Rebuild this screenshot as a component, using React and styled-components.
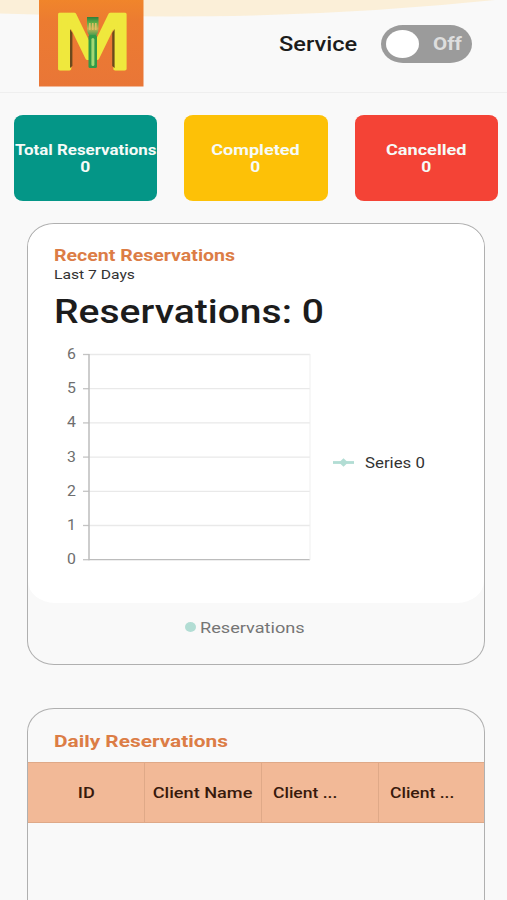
import React,{useState} from 'react';
import styled, { createGlobalStyle } from 'styled-components';

const GlobalStyle = createGlobalStyle`
  * {
    box-sizing: border-box;
  }
  body {
    margin: 0;
    background: #f9f9f9;
    font-family: Roboto, sans-serif;
    color: #1c1c1c;
    overflow: hidden;
  }
`

const stats = [
    { title: 'Total Reservations', value: 0, color: '#049687', stretch: 1.165 },
    { title: 'Completed', value: 0, color: '#fdc107', stretch: 1.245 },
    { title: 'Cancelled', value: 0, color: '#f44336', stretch: 1.25 },
];

const columns = [
    { title: 'ID', pad: 0, center: true, stretch: 1.17 },
    { title: 'Client Name', pad: 0, center: true, stretch: 1.17 },
    { title: 'Client ...', pad: 10.5, stretch: 1.13 },
    { title: 'Client ...', pad: 10.5, stretch: 1.13 },
];

const ticks = [6, 5, 4, 3, 2, 1, 0];

function Logo() {
    return (
        <LogoBox viewBox="0 0 105 87">
            <defs>
                <linearGradient id="bg" x1="0" y1="0" x2="0" y2="1">
                    <stop offset="0" stopColor="#f0852b" />
                    <stop offset="0.25" stopColor="#ec7b31" />
                    <stop offset="1" stopColor="#e97637" />
                </linearGradient>
                <linearGradient id="fork" x1="0" y1="0" x2="0" y2="1">
                    <stop offset="0" stopColor="#2f7f3c" />
                    <stop offset="0.3" stopColor="#5fae45" />
                    <stop offset="0.6" stopColor="#c3b356" />
                    <stop offset="1" stopColor="#2f9a4c" />
                </linearGradient>
            </defs>
            <rect width="104.5" height="86.5" fill="url(#bg)" />
            <LogoLetter transform="translate(11.4 69) scale(1.285 1)">M</LogoLetter>
            <path d="M31 29l2.400 4v33l-2.400 2z" fill="#6b4a1c" />
            <path d="M75.600 29l-2.400 4v33l2.400 2z" fill="#6b4a1c" />
            {/* fork */}
            <path d="M48 17h11.500v11q0 6-3.500 8.500h-4.500q-3.500-2.500-3.500-8.500z" fill="url(#fork)" />
            <path d="M50.800 23v7M53.800 23v7M56.800 23v7" stroke="#e2bf63" strokeWidth="1.500" />
            <rect x="49.500" y="35" width="8.500" height="33" rx="1.500" fill="#329a48" />
            <rect x="52.400" y="38" width="3" height="28" rx="1.500" fill="#a3d873" />
        </LogoBox>
    )
}

function Chart() {
    return (
        <ChartBox>
            <Axis>
                {ticks.map((t)=> <Tick key={t}><Text size={14} stretch={1.13} color="#6e6e6e">{t}</Text></Tick>)}
            </Axis>
            <Plot viewBox="0 0 230 212">
                {ticks.map((t, i)=> (
                    <g key={t}>
                        <line x1="8" x2="229" y1={3.500 + i * 34.200} y2={3.500 + i * 34.200} stroke={t === 0 ? '#bcbcbc' : '#e9e9e9'} strokeWidth="1.300" />
                        <line x1="2" x2="8" y1={3.500 + i * 34.200} y2={3.500 + i * 34.200} stroke="#c4c4c4" strokeWidth="1.300" />
                    </g>
                ))}
                <line x1="229" x2="229" y1="3" y2="209" stroke="#efefef" />
                <line x1="8" x2="8" y1="3" y2="209.300" stroke="#bcbcbc" strokeWidth="1.500" />
            </Plot>
            <SeriesKey>
                <svg width="21" height="10" viewBox="0 0 21 10">
                    <path d="M0 4.500h21" stroke="#b2ddd4" strokeWidth="2.800" />
                    <path d="M10.500 0.300l4.500 4.200-4.500 4.200-4.500-4.200z" fill="#b2ddd4" />
                </svg>
                <Text size={14} stretch={1.2} color="#333" line={18}>Series 0</Text>
            </SeriesKey>
        </ChartBox>
    )
}

function App() {

    const [service, setService] = useState(false);

    return (
        <Page>
            <GlobalStyle />
            <Wave viewBox="0 0 507 20">
                <path d="M0 0H495Q380 12 254 15.500Q140 18 0 13.500Z" fill="#fbefd8" />
            </Wave>
            <Header>
                <Logo />
                <Service>
                    <Text size={20} weight={500} stretch={1.18} line={20}>Service</Text>
                    <Switch onClick={()=> setService(!service)} $on={service}>
                        <Knob />
                        <Text size={18.500} weight={700} stretch={1.11} color="#dedede" line={18}>{service ? 'On' : 'Off'}</Text>
                    </Switch>
                </Service>
            </Header>

            <Stats>
                {stats.map((s)=> (
                    <StatCard key={s.title} $color={s.color}>
                        <Text size={14.500} weight={700} stretch={s.stretch} color="#f6fbf8" origin="center">{s.title}</Text>
                        <Text size={14.500} weight={700} stretch={1.2} color="#f6fbf8" origin="center">{s.value}</Text>
                    </StatCard>
                ))}
            </Stats>

            <Recent>
                <RecentBody>
                    <Text size={16} weight={700} stretch={1.22} color="#dc7d46" line={20}>Recent Reservations</Text>
                    <Text size={13.500} stretch={1.16} color="#333" line={16}>Last 7 Days</Text>
                    <Total><Text size={33} weight={500} stretch={1.183} line={40}>Reservations: 0</Text></Total>
                    <Chart />
                </RecentBody>
                <Legend>
                    <Dot />
                    <Text size={15.500} stretch={1.17} color="#757575">Reservations</Text>
                </Legend>
            </Recent>

            <Daily>
                <DailyTitle><Text size={17} weight={700} stretch={1.225} color="#dc7d46">Daily Reservations</Text></DailyTitle>
                <TableHead>
                    {columns.map((c, i)=> (
                        <HeadCell key={i} $pad={c.pad} $center={c.center}>
                            <Text size={15.500} weight={500} stretch={c.stretch} color="#38190c" origin={c.center ? 'center' : 'left'}>{c.title}</Text>
                        </HeadCell>
                    ))}
                </TableHead>
            </Daily>
        </Page>
    )
}

export default App

// wide lettering, the stretch is horizontal only
function Text({ size, weight, stretch, color, line, origin, children }) {
    return <Letters $size={size} $weight={weight} $stretch={stretch} $color={color} $line={line} $origin={origin}>{children}</Letters>
}

const Letters = styled.span `
display:block;
white-space:nowrap;
font-size:${(p)=> p.$size}px;
font-weight:${(p)=> p.$weight || 400};
line-height:${(p)=> p.$line ? p.$line + 'px' : '17px'};
color:${(p)=> p.$color || '#1c1c1c'};
transform:scaleX(${(p)=> p.$stretch || 1});
transform-origin:${(p)=> p.$origin || 'left'} center;
`
const Page = styled.div `
position:relative;
height:900px;
overflow:hidden;
`
const Wave = styled.svg `
position:absolute;
top:0;
left:0;
width:507px;
height:20px;
z-index:-1;
`
const Header = styled.header `
display:flex;
justify-content:space-between;
height:93px;
padding:0 35px 0 39px;
border-bottom:1px solid #efefef;
`
const LogoBox = styled.svg `
width:105px;
height:87px;
overflow:visible;
`
const LogoLetter = styled.text `
font-family:'DejaVu Sans', sans-serif;
font-weight:400;
font-size:75.4px;
fill:#efe83d;
stroke:#efe83d;
stroke-width:3px;
stroke-linejoin:round;
`
const Service = styled.div `
display:grid;
grid-template-columns:102.5px 91px;
align-items:center;
height:87px;
`
const Switch = styled.button `
display:grid;
grid-template-columns:46.5px auto;
align-items:center;
width:91px;
height:38px;
padding:0 0 0 5px;
border:0;
border-radius:22px / 19px;
background:${(p)=> p.$on ? '#049687' : '#9b9b9b'};
font-family:inherit;
text-align:left;
`
const Knob = styled.span `
width:33px;
height:28px;
border-radius:50%;
background:#fff;
`
const Stats = styled.section `
display:flex;
gap:27px;
padding:21.5px 0 0 14.3px;
`
const StatCard = styled.div `
display:flex;
flex-direction:column;
align-items:center;
justify-content:center;
flex:0 0 143.2px;
height:86.5px;
padding:2px 1px 0 0;
border-radius:9px / 8px;
background:${(p)=> p.$color};
`
const Panel = styled.section `
width:458px;
margin-left:27px;
border:1.5px solid #b0b0b0;
border-radius:27px / 24px;
overflow:hidden;
`
const Recent = styled(Panel) `
height:442px;
margin-top:22px;
`
const RecentBody = styled.div `
height:379px;
padding:22px 0 0 26px;
border-radius:27px / 22px;
background:#fff;
`
const Total = styled.div `
padding-top:10px;
`
const ChartBox = styled.div `
display:flex;
margin-top:14px;
`
const Axis = styled.div `
width:27px;
padding-left:13px;
`
const Tick = styled.div `
height:34.2px;
`
const Plot = styled.svg `
flex:none;
width:230px;
height:212px;
margin-top:5px;
`
const SeriesKey = styled.div `
display:flex;
align-items:center;
gap:11px;
height:18px;
margin:108px 0 0 22px;
`
const Legend = styled.div `
display:flex;
align-items:center;
gap:4px;
padding:17px 0 0 156.5px;
`
const Dot = styled.span `
width:11px;
height:10px;
margin-bottom:3px;
border-radius:50%;
background:#b2ddd4;
`
const Daily = styled(Panel) `
height:240px;
margin-top:43px;
`
const DailyTitle = styled.div `
height:53px;
padding:24px 0 0 26px;
`
const TableHead = styled.div `
display:grid;
grid-template-columns:repeat(4, 117px);
height:61px;
background:#f2b997;
border-top:1px solid #dfa988;
border-bottom:1px solid #dfa988;
`
const HeadCell = styled.div `
display:flex;
align-items:center;
justify-content:${(p)=> p.$center ? 'center' : 'flex-start'};
padding-top:1px;
padding-left:${(p)=> p.$pad}px;
border-right:1px solid #dfa988;
`
